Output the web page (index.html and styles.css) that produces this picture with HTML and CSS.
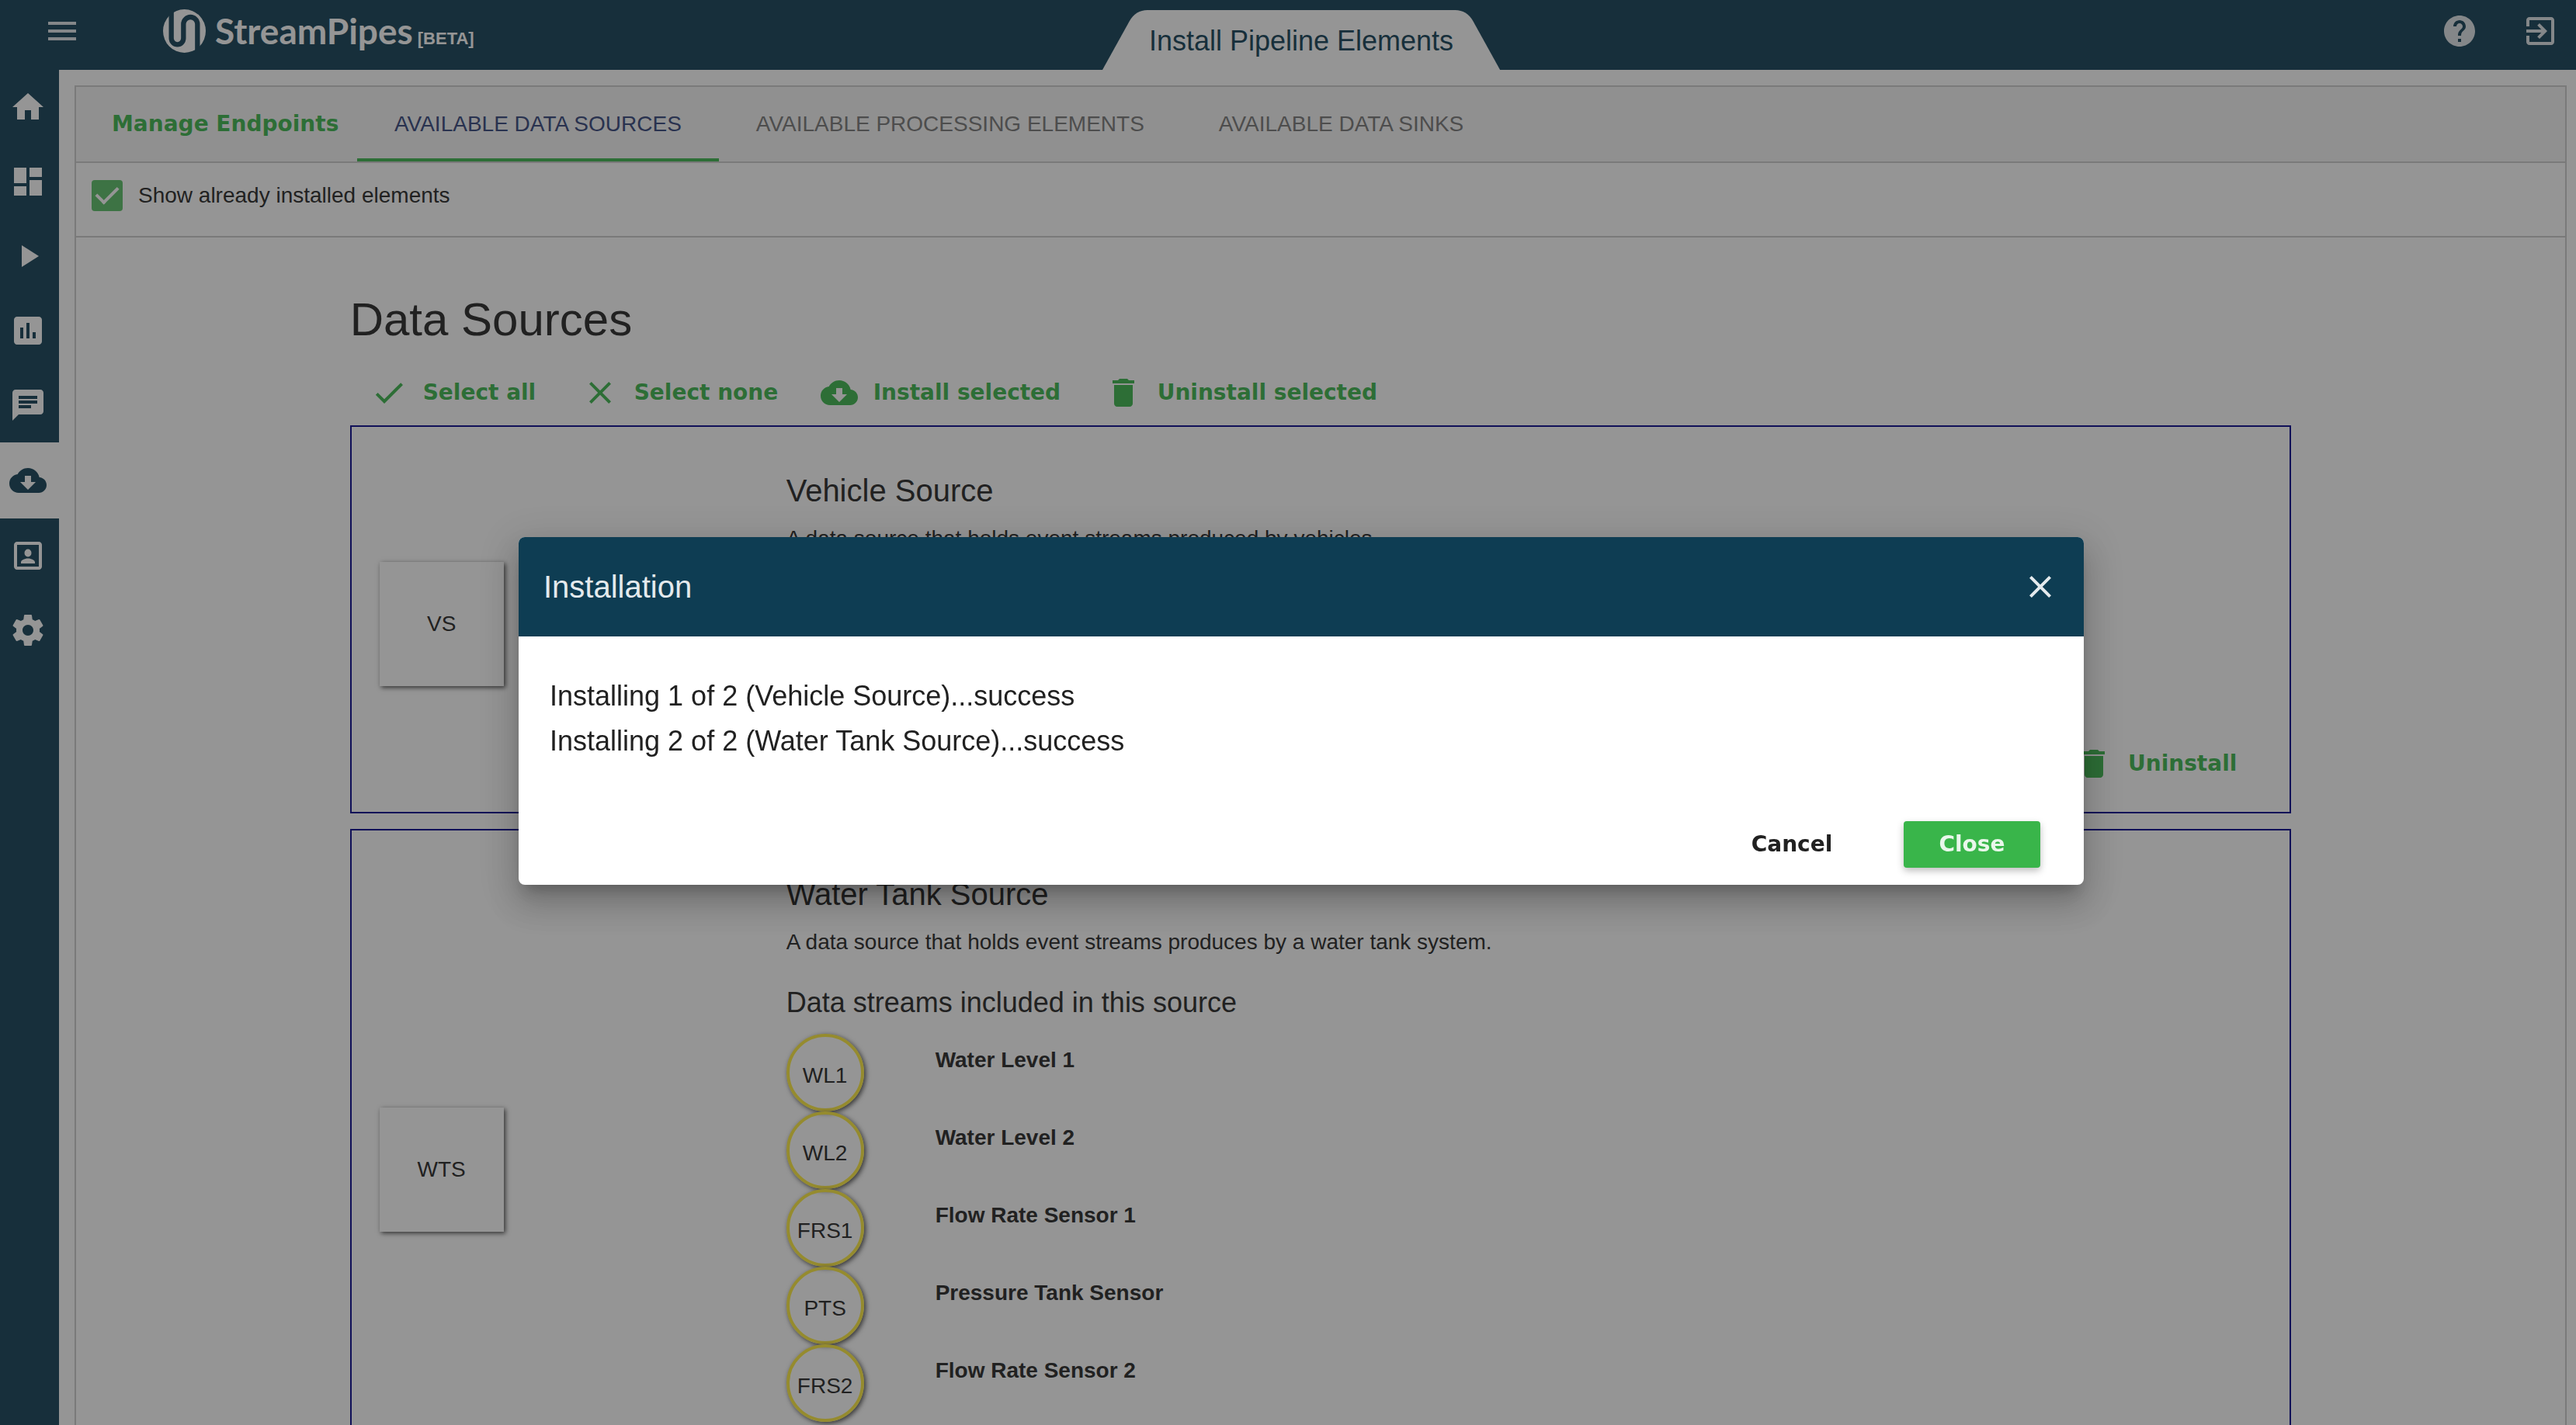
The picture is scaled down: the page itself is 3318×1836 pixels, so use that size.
FILE: index.html
```
<!DOCTYPE html>
<html lang="en">
<head>
<meta charset="utf-8">
<title>StreamPipes - Install Pipeline Elements</title>
<link rel="stylesheet" href="styles.css">
</head>
<body>
<svg class="icon-defs" aria-hidden="true">
  <symbol id="i-menu" viewBox="0 0 24 24"><path d="M3 18h18v-2H3v2zm0-5h18v-2H3v2zm0-7v2h18V6H3z"/></symbol>
  <symbol id="i-help" viewBox="0 0 24 24"><path d="M12 2C6.48 2 2 6.48 2 12s4.480 10 10 10 10-4.480 10-10S17.520 2 12 2zm1 17h-2v-2h2v2zm2.070-7.750l-.9.920C13.450 12.900 13 13.500 13 15h-2v-.5c0-1.100.450-2.100 1.170-2.830l1.240-1.260c.370-.360.590-.860.590-1.410 0-1.100-.9-2-2-2s-2 .9-2 2H8c0-2.210 1.790-4 4-4s4 1.790 4 4c0 .880-.360 1.680-.930 2.250z"/></symbol>
  <symbol id="i-exit" viewBox="0 0 24 24"><path d="M10.090 15.590L11.500 17l5-5-5-5-1.410 1.410L12.670 11H3v2h9.670l-2.580 2.590zM19 3H5c-1.110 0-2 .9-2 2v4h2V5h14v14H5v-4H3v4c0 1.100.890 2 2 2h14c1.100 0 2-.9 2-2V5c0-1.100-.9-2-2-2z"/></symbol>
  <symbol id="i-home" viewBox="0 0 24 24"><path d="M10 20v-6h4v6h5v-8h3L12 3 2 12h3v8z"/></symbol>
  <symbol id="i-dashboard" viewBox="0 0 24 24"><path d="M3 13h8V3H3v10zm0 8h8v-6H3v6zm10 0h8V11h-8v10zm0-18v6h8V3h-8z"/></symbol>
  <symbol id="i-play" viewBox="0 0 24 24"><path d="M8 5v14l11-7z"/></symbol>
  <symbol id="i-chart" viewBox="0 0 24 24"><path d="M19 3H5c-1.100 0-2 .9-2 2v14c0 1.100.9 2 2 2h14c1.100 0 2-.9 2-2V5c0-1.100-.9-2-2-2zM9 17H7v-7h2v7zm4 0h-2V7h2v10zm4 0h-2v-4h2v4z"/></symbol>
  <symbol id="i-chat" viewBox="0 0 24 24"><path d="M20 2H4c-1.100 0-1.990.9-1.990 2L2 22l4-4h14c1.100 0 2-.9 2-2V4c0-1.100-.9-2-2-2zM6 9h12v2H6V9zm8 5H6v-2h8v2zm4-6H6V6h12v2z"/></symbol>
  <symbol id="i-cloud" viewBox="0 0 24 24"><path d="M19.350 10.040C18.670 6.590 15.640 4 12 4 9.110 4 6.600 5.640 5.350 8.040 2.340 8.360 0 10.910 0 14c0 3.310 2.690 6 6 6h13c2.760 0 5-2.240 5-5 0-2.640-2.050-4.780-4.650-4.960zM17 13l-5 5-5-5h3V9h4v4h3z"/></symbol>
  <symbol id="i-account" viewBox="0 0 24 24"><path d="M19 5v14H5V5h14m0-2H5c-1.100 0-2 .9-2 2v14c0 1.100.9 2 2 2h14c1.100 0 2-.9 2-2V5c0-1.100-.9-2-2-2zm-7 9.750a2.250 2.500 0 1 0 0-5 2.250 2.500 0 0 0 0 5zM7.500 17v-.75c0-1.700 3-2.500 4.500-2.500s4.500.8 4.500 2.500V17z"/></symbol>
  <symbol id="i-settings" viewBox="0 0 24 24"><path d="M19.430 12.980c.040-.320.070-.640.070-.980s-.030-.660-.070-.980l2.110-1.650c.190-.150.240-.420.120-.640l-2-3.460c-.120-.220-.390-.3-.610-.220l-2.490 1c-.520-.4-1.080-.730-1.690-.980l-.380-2.650C14.460 2.180 14.250 2 14 2h-4c-.250 0-.460.180-.490.420l-.380 2.650c-.610.250-1.170.590-1.690.980l-2.490-1c-.230-.090-.490 0-.610.220l-2 3.460c-.130.220-.070.490.120.640l2.110 1.650c-.040.320-.070.650-.070.980s.030.660.070.980l-2.110 1.650c-.190.150-.240.420-.120.640l2 3.460c.120.220.390.3.610.220l2.490-1c.520.4 1.080.730 1.690.980l.380 2.650c.030.240.240.420.490.420h4c.250 0 .460-.180.490-.420l.380-2.650c.610-.250 1.170-.590 1.690-.980l2.490 1c.230.090.490 0 .610-.220l2-3.460c.120-.220.070-.490-.120-.640l-2.110-1.650zM12 15.500c-1.930 0-3.500-1.570-3.500-3.500s1.570-3.500 3.500-3.500 3.500 1.570 3.500 3.500-1.570 3.500-3.500 3.500z"/></symbol>
  <symbol id="i-check" viewBox="0 0 24 24"><path d="M9 16.170L4.830 12l-1.420 1.410L9 19 21 7l-1.410-1.410z"/></symbol>
  <symbol id="i-close" viewBox="0 0 24 24"><path d="M19 6.410L17.590 5 12 10.590 6.410 5 5 6.410 10.590 12 5 17.590 6.410 19 12 13.410 17.590 19 19 17.590 13.410 12z"/></symbol>
  <symbol id="i-delete" viewBox="0 0 24 24"><path d="M6 19c0 1.100.9 2 2 2h8c1.100 0 2-.9 2-2V7H6v12zM19 4h-3.500l-1-1h-5l-1 1H5v2h14V4z"/></symbol>
</svg>

<header class="topbar">
  <div class="topbar-left">
    <button class="icon-button" type="button" aria-label="Menu"><svg class="icon"><use href="#i-menu"/></svg></button>
    <a class="brand" href="#">
      <svg class="brand-mark" viewBox="0 0 165 168" aria-hidden="true">
        <ellipse class="brand-disc" cx="82.500" cy="84" rx="82.500" ry="84"/>
        <path class="brand-band" d="M32 -6V112A23.500 24 0 0 0 79 112V57A27 27 0 0 1 133 57V174"/>
      </svg>
      <span class="brand-name">StreamPipes</span>
      <span class="brand-tag">[BETA]</span>
    </a>
  </div>
  <h1 class="page-tab">
    <svg class="page-tab-shape" viewBox="0 0 513 77" preserveAspectRatio="none" aria-hidden="true"><path d="M0 77L35 14Q43 0 58 0H455Q470 0 478 14L513 77Z"/></svg>
    <span class="page-tab-text">Install Pipeline Elements</span>
  </h1>
  <div class="topbar-right">
    <button class="icon-button" type="button" aria-label="Help"><svg class="icon"><use href="#i-help"/></svg></button>
    <button class="icon-button" type="button" aria-label="Logout"><svg class="icon"><use href="#i-exit"/></svg></button>
  </div>
</header>

<div class="shell">
  <nav class="sidebar" aria-label="Main">
    <a href="#" aria-label="Home"><svg class="icon"><use href="#i-home"/></svg></a>
    <a href="#" aria-label="Editor"><svg class="icon"><use href="#i-dashboard"/></svg></a>
    <a href="#" aria-label="Pipelines"><svg class="icon"><use href="#i-play"/></svg></a>
    <a href="#" aria-label="Dashboard"><svg class="icon"><use href="#i-chart"/></svg></a>
    <a href="#" aria-label="Notifications"><svg class="icon"><use href="#i-chat"/></svg></a>
    <a href="#" class="active" aria-label="Install Pipeline Elements"><svg class="icon"><use href="#i-cloud"/></svg></a>
    <a href="#" aria-label="My Elements"><svg class="icon"><use href="#i-account"/></svg></a>
    <a href="#" aria-label="Configuration"><svg class="icon"><use href="#i-settings"/></svg></a>
  </nav>

  <main class="panel">
    <div class="tabs">
      <button class="manage" type="button">Manage Endpoints</button>
      <button class="tab active" type="button">AVAILABLE DATA SOURCES</button>
      <button class="tab" type="button">AVAILABLE PROCESSING ELEMENTS</button>
      <button class="tab" type="button">AVAILABLE DATA SINKS</button>
    </div>

    <div class="filter">
      <input class="checkbox" type="checkbox" id="show-installed" checked>
      <label for="show-installed">Show already installed elements</label>
    </div>

    <section class="content">
      <h2 class="content-title">Data Sources</h2>
      <div class="toolbar">
        <button class="action" type="button"><svg class="icon"><use href="#i-check"/></svg>Select all</button>
        <button class="action" type="button"><svg class="icon"><use href="#i-close"/></svg>Select none</button>
        <button class="action" type="button"><svg class="icon"><use href="#i-cloud"/></svg>Install selected</button>
        <button class="action" type="button"><svg class="icon"><use href="#i-delete"/></svg>Uninstall selected</button>
      </div>

      <article class="card">
        <div class="card-side"><div class="tile">VS</div></div>
        <div class="card-body">
          <h3 class="card-title">Vehicle Source</h3>
          <p class="card-text">A data source that holds event streams produced by vehicles.</p>
          <button class="action card-action" type="button"><svg class="icon"><use href="#i-delete"/></svg>Uninstall</button>
        </div>
      </article>

      <article class="card">
        <div class="card-side"><div class="tile">WTS</div></div>
        <div class="card-body">
          <h3 class="card-title">Water Tank Source</h3>
          <p class="card-text">A data source that holds event streams produces by a water tank system.</p>
          <h4 class="streams-title">Data streams included in this source</h4>
          <ul class="streams">
            <li><span class="badge">WL1</span><strong>Water Level 1</strong></li>
            <li><span class="badge">WL2</span><strong>Water Level 2</strong></li>
            <li><span class="badge">FRS1</span><strong>Flow Rate Sensor 1</strong></li>
            <li><span class="badge">PTS</span><strong>Pressure Tank Sensor</strong></li>
            <li><span class="badge">FRS2</span><strong>Flow Rate Sensor 2</strong></li>
          </ul>
        </div>
      </article>
    </section>
  </main>
</div>

<div class="overlay">
  <div class="dialog" role="dialog" aria-modal="true" aria-labelledby="dialog-title">
    <header class="dialog-head">
      <h2 id="dialog-title">Installation</h2>
      <button class="icon-button" type="button" aria-label="Close dialog"><svg class="icon"><use href="#i-close"/></svg></button>
    </header>
    <div class="dialog-body">
      <p>Installing 1 of 2 (Vehicle Source)...success</p>
      <p>Installing 2 of 2 (Water Tank Source)...success</p>
    </div>
    <footer class="dialog-foot">
      <button class="button" type="button">Cancel</button>
      <button class="button primary" type="button">Close</button>
    </footer>
  </div>
</div>
</body>
</html>
```

FILE: styles.css
```
:root {
  --brand: #0e3d53;
  --green: #39b54a;
  --text: #212121;
  --line: #cccccc;
  --heavy: "Arial Black", "DejaVu Sans", sans-serif;
}

* {
  box-sizing: border-box;
}

body {
  margin: 0;
  height: 100vh;
  overflow: hidden;
  background: #ffffff;
  color: var(--text);
  font-family: Arial, "Liberation Sans", sans-serif;
  font-size: 28px;
  line-height: 36px;
}

h1, h2, h3, h4, p, ul {
  margin: 0;
  padding: 0;
  font-weight: 400;
}

button {
  margin: 0;
  padding: 0;
  border: 0;
  background: none;
  color: inherit;
  font: inherit;
}

a {
  color: inherit;
  text-decoration: none;
}

.icon-defs {
  display: none;
}

.icon {
  display: block;
  flex: none;
  width: 48px;
  height: 48px;
  fill: currentColor;
}

/* Top bar */
.topbar {
  display: grid;
  grid-template-columns: 1fr auto 1fr;
  height: 90px;
  padding: 0 22px 0 56px;
  background: var(--brand);
  color: #ffffff;
}

.topbar-left,
.topbar-right {
  display: flex;
  align-items: center;
  height: 80px;
}

.topbar-left {
  gap: 106px;
}

.topbar-right {
  justify-content: flex-end;
  gap: 56px;
}

.topbar .icon-button {
  color: #dfe5e8;
}

.brand {
  display: flex;
  align-items: baseline;
  height: 56px;
  line-height: 56px;
}

.brand-mark {
  align-self: center;
  width: 55px;
  height: 56px;
  margin-right: 12px;
}

.brand-disc {
  fill: #ffffff;
}

.brand-band {
  fill: none;
  stroke: var(--brand);
  stroke-width: 19;
}

.brand-name {
  font-family: Lato, "Liberation Sans", sans-serif;
  font-size: 46px;
  font-weight: 700;
}

.brand-tag {
  margin-left: 6px;
  font-size: 22px;
  font-weight: 700;
}

.page-tab {
  position: relative;
  align-self: end;
  height: 77px;
  padding: 0 60px;
  color: var(--brand);
  font-size: 36px;
  line-height: 80px;
}

.page-tab-shape {
  position: absolute;
  inset: 0;
  width: 100%;
  height: 100%;
  fill: #ffffff;
}

.page-tab-text {
  position: relative;
}

/* Sidebar */
.shell {
  display: flex;
  align-items: stretch;
  min-height: calc(100vh - 90px);
}

.sidebar {
  flex: none;
  width: 76px;
  background: var(--brand);
  color: #ffffff;
}

.sidebar a {
  display: flex;
  align-items: center;
  height: 96px;
  padding-left: 12px;
}

.sidebar a.active {
  height: 98px;
  background: #ffffff;
  color: var(--brand);
}

/* Main panel */
.panel {
  flex: 1;
  min-width: 0;
  margin: 20px 12px 20px 20px;
  border: 2px solid var(--line);
}

.tabs {
  display: flex;
  height: 98px;
  border-bottom: 2px solid var(--line);
  background: #f6f6f6;
}

.manage {
  width: 362px;
  padding-left: 46px;
  color: var(--green);
  font-family: var(--heavy);
  font-weight: 900;
  text-align: left;
}

.tab {
  padding: 0 48px;
  color: #757575;
}

.tab.active {
  color: #30427a;
  box-shadow: inset 0 -4px 0 var(--green);
}

.filter {
  display: flex;
  align-items: center;
  gap: 20px;
  padding: 22px 20px 32px;
  border-bottom: 2px solid var(--line);
}

.checkbox {
  appearance: none;
  display: grid;
  place-items: center;
  width: 40px;
  height: 40px;
  margin: 0;
  border-radius: 4px;
  background: #57bf64;
}

.checkbox:checked::before {
  content: "";
  width: 12px;
  height: 24px;
  margin-top: -8px;
  border: solid #ffffff;
  border-width: 0 4px 4px 0;
  transform: rotate(45deg);
}

.content {
  margin: 0 11%;
  padding: 64px 0 20px;
}

.content-title {
  margin-bottom: 10px;
  font-size: 60px;
  line-height: 84px;
}

.toolbar {
  display: grid;
  grid-template-columns: 272px 308px 366px auto;
  align-items: center;
  height: 84px;
  padding-left: 26px;
}

.action {
  display: flex;
  align-items: center;
  gap: 20px;
  color: var(--green);
  font-family: var(--heavy);
  font-weight: 900;
  white-space: nowrap;
}

/* Source cards */
.card {
  display: grid;
  grid-template-columns: 560px 1fr;
  min-height: 500px;
  margin-bottom: 20px;
  border: 2px solid #00008b;
}

.card:last-child {
  min-height: 866px;
}

.card-side {
  display: flex;
  align-items: center;
  padding: 12px 36px 0;
}

.tile {
  display: grid;
  place-items: center;
  width: 160px;
  height: 160px;
  box-shadow: 2px 2px 6px #444444;
  background: #ffffff;
}

.card-body {
  display: flex;
  flex-direction: column;
  padding: 58px 68px 38px 0;
}

.card-title {
  font-size: 40px;
  line-height: 48px;
}

.card-text {
  margin-top: 20px;
}

.card-action {
  align-self: flex-end;
  margin-top: auto;
}

.streams-title {
  margin: 38px 0 18px;
  font-size: 36px;
  line-height: 44px;
}

.streams {
  list-style: none;
}

.streams li {
  display: grid;
  grid-template-columns: 192px 1fr;
  height: 100px;
}

.streams strong {
  padding-top: 16px;
}

.badge {
  display: grid;
  place-items: center;
  width: 100px;
  height: 100px;
  padding-top: 8px;
  border: 4px solid #ffeb3b;
  border-radius: 50%;
  box-shadow: 2px 2px 6px #444444;
}

/* Dialog */
.overlay {
  position: fixed;
  inset: 0;
  display: flex;
  align-items: center;
  justify-content: center;
  padding: 0 0 4px 34px;
  background: rgba(33, 33, 33, 0.48);
}

.dialog {
  width: 80%;
  max-width: 2016px;
  overflow: hidden;
  border-radius: 8px;
  background: #ffffff;
  box-shadow: 0 14px 16px -8px rgba(0, 0, 0, 0.2), 0 26px 38px 4px rgba(0, 0, 0, 0.14), 0 10px 48px 8px rgba(0, 0, 0, 0.12);
}

.dialog-head {
  display: flex;
  align-items: center;
  justify-content: space-between;
  height: 128px;
  padding: 0 32px;
  background: var(--brand);
  color: #e4eaed;
}

.dialog-head h2 {
  font-size: 40px;
  line-height: 48px;
}

.dialog-body {
  padding: 48px 40px 74px;
  font-size: 36px;
  line-height: 58px;
}

.dialog-foot {
  display: flex;
  justify-content: flex-end;
  gap: 56px;
  padding: 0 56px 22px;
}

.button {
  width: 176px;
  height: 60px;
  border-radius: 4px;
  font-family: var(--heavy);
  font-weight: 900;
}

.button.primary {
  background: var(--green);
  color: #e9f7eb;
  box-shadow: 0 4px 10px rgba(0, 0, 0, 0.26);
}
```
